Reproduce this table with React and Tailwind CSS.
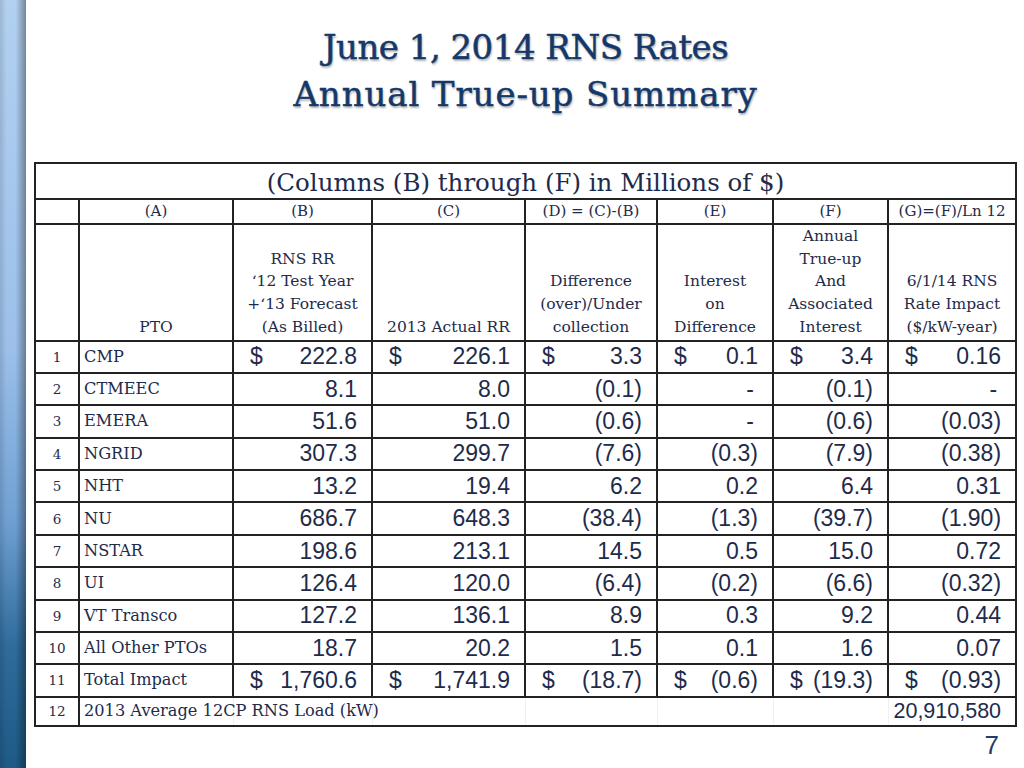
import React from "react";

const rows = [
  ["1", "CMP", [["$", "222.8"], ["$", "226.1"], ["$", "3.3"], ["$", "0.1"], ["$", "3.4"], ["$", "0.16"]]],
  ["2", "CTMEEC", [["", "8.1"], ["", "8.0"], ["", "(0.1)"], ["", "-"], ["", "(0.1)"], ["", "-"]]],
  ["3", "EMERA", [["", "51.6"], ["", "51.0"], ["", "(0.6)"], ["", "-"], ["", "(0.6)"], ["", "(0.03)"]]],
  ["4", "NGRID", [["", "307.3"], ["", "299.7"], ["", "(7.6)"], ["", "(0.3)"], ["", "(7.9)"], ["", "(0.38)"]]],
  ["5", "NHT", [["", "13.2"], ["", "19.4"], ["", "6.2"], ["", "0.2"], ["", "6.4"], ["", "0.31"]]],
  ["6", "NU", [["", "686.7"], ["", "648.3"], ["", "(38.4)"], ["", "(1.3)"], ["", "(39.7)"], ["", "(1.90)"]]],
  ["7", "NSTAR", [["", "198.6"], ["", "213.1"], ["", "14.5"], ["", "0.5"], ["", "15.0"], ["", "0.72"]]],
  ["8", "UI", [["", "126.4"], ["", "120.0"], ["", "(6.4)"], ["", "(0.2)"], ["", "(6.6)"], ["", "(0.32)"]]],
  ["9", "VT Transco", [["", "127.2"], ["", "136.1"], ["", "8.9"], ["", "0.3"], ["", "9.2"], ["", "0.44"]]],
  ["10", "All Other PTOs", [["", "18.7"], ["", "20.2"], ["", "1.5"], ["", "0.1"], ["", "1.6"], ["", "0.07"]]],
  ["11", "Total Impact", [["$", "1,760.6"], ["$", "1,741.9"], ["$", "(18.7)"], ["$", "(0.6)"], ["$", "(19.3)"], ["$", "(0.93)"]]],
];

const headers = [
  ["PTO"],
  ["RNS RR", "\u201812 Test Year", "+\u201813 Forecast", "(As Billed)"],
  ["2013 Actual RR"],
  ["Difference", "(over)/Under", "collection"],
  ["Interest", "on", "Difference"],
  ["Annual", "True-up", "And", "Associated", "Interest"],
  ["6/1/14 RNS", "Rate Impact", "($/kW-year)"],
];

const letters = ["(A)", "(B)", "(C)", "(D) = (C)-(B)", "(E)", "(F)", "(G)=(F)/Ln 12"];

export default function App() {
  return (
    <div className="w-[1024px] h-[768px] flex bg-white overflow-hidden">
      <div className="w-[26px] h-full shrink-0 bg-[linear-gradient(to_right,rgba(0,0,0,0.12),rgba(0,0,0,0)_25%,rgba(0,0,0,0)_60%,rgba(0,0,0,0.35)),linear-gradient(to_bottom,#b2d0f0,#9cc0ea_45%,#6f9fd2_68%,#2f6c9c_84%,#1d5a86)]" />
      <div className="flex-1 flex flex-col pl-[8px] pr-[9px]">
        <div className="pt-[24px] h-[162px] text-center text-[#15386a] font-['DejaVu_Serif',serif] text-[34px] leading-[47px] [-webkit-text-stroke:0.5px_#15386a] [text-shadow:1px_2px_2px_rgba(0,0,0,0.3)]">
          <div className="tracking-[-0.5px]">June 1, 2014 RNS Rates</div>
          <div className="tracking-[0.9px]">Annual True-up Summary</div>
        </div>
        <table className="table-fixed border-collapse w-[981px] text-[#1e2b4a] font-['DejaVu_Serif',serif]">
          <colgroup>
            <col className="w-[44px]" />
            <col className="w-[154px]" />
            <col className="w-[139px]" />
            <col className="w-[153px]" />
            <col className="w-[132px]" />
            <col className="w-[116px]" />
            <col className="w-[115px]" />
            <col className="w-[128px]" />
          </colgroup>
          <tbody>
            <tr className="h-[36px]">
              <td colSpan={8} className="border-2 border-[#222] text-center text-[24.5px] leading-none pt-[4px] whitespace-nowrap">
                (Columns (B) through (F) in Millions of $)
              </td>
            </tr>
            <tr className="h-[25px]">
              <td className="border-2 border-[#222]" />
              {letters.map((l, i) => (
                <td key={i} className="border-2 border-[#222] text-center text-[15px] leading-none whitespace-nowrap">
                  {l}
                </td>
              ))}
            </tr>
            <tr className="h-[115px]">
              <td className="border-2 border-[#222]" />
              {headers.map((h, i) => (
                <td key={i} className="border-2 border-[#222] text-center align-bottom text-[15.5px] leading-[22.7px] pb-[1px] whitespace-nowrap">
                  {h.map((line, j) => (
                    <div key={j}>{line}</div>
                  ))}
                </td>
              ))}
            </tr>
            {rows.map(([n, label, cells]) => (
              <tr key={n} className="h-[32.4px]">
                <td className="border-2 border-[#222] text-center text-[13.5px]">{n}</td>
                <td className="border-2 border-[#222] pl-[4px] text-[16.2px] whitespace-nowrap">{label}</td>
                {cells.map(([d, v], i) => (
                  <td key={i} className="border-2 border-[#222] font-['Liberation_Sans',sans-serif] text-[23px] leading-none">
                    <div className="flex justify-between items-center pl-[16px] pr-[14px]">
                      <span>{d}</span>
                      <span className={v === "-" ? "mr-[4px]" : ""}>{v}</span>
                    </div>
                  </td>
                ))}
              </tr>
            ))}
            <tr className="h-[29px]">
              <td className="border-2 border-[#222] text-center text-[13.5px]">12</td>
              <td className="border-y-2 border-l-2 border-r border-y-[#222] border-l-[#222] border-r-[#f0f0f0] pl-[4px] text-[16.2px] whitespace-nowrap overflow-visible">
                2013 Average 12CP RNS Load (kW)
              </td>
              <td className="border-y-2 border-x border-y-[#222] border-x-[#f0f0f0]" />
              <td className="border-y-2 border-x border-y-[#222] border-x-[#f0f0f0]" />
              <td className="border-y-2 border-x border-y-[#222] border-x-[#f0f0f0]" />
              <td className="border-y-2 border-x border-y-[#222] border-x-[#f0f0f0]" />
              <td className="border-y-2 border-x border-y-[#222] border-x-[#f0f0f0]" />
              <td className="border-y-2 border-r-2 border-l border-y-[#222] border-r-[#222] border-l-[#f0f0f0] text-right pr-[14px] font-['Liberation_Sans',sans-serif] text-[21.5px] leading-none">
                20,910,580
              </td>
            </tr>
          </tbody>
        </table>
        <div className="text-right pr-[18px] pt-[5px] text-[26px] leading-none text-[#1f3d6b] font-['Liberation_Sans',sans-serif]">
          7
        </div>
      </div>
    </div>
  );
}
